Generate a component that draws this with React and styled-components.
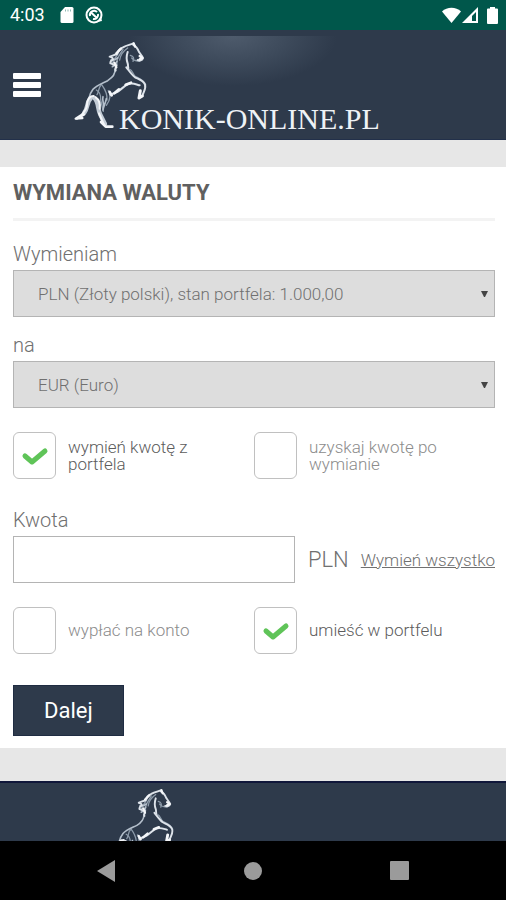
import React, { useState } from "react";
import styled, { createGlobalStyle, css } from "styled-components";

const color = {
  status: "#00574b",
  navy: "#2e3a4b",
  strip: "#e7e7e7",
  text: "#707070",
  muted: "#8c8c8c",
  border: "#b4b4b4",
  green: "#5fc458",
};

const GlobalStyle = createGlobalStyle`
  * {
    box-sizing: border-box;
  }
  body {
    margin: 0;
    background: ${color.strip};
    font-family: Roboto, "Liberation Sans", sans-serif;
    font-weight: 300;
    color: ${color.text};
  }
`;

const Screen = styled.div`
  display: flex;
  flex-direction: column;
  min-height: 100vh;
`;

const StatusBar = styled.div`
  display: flex;
  align-items: center;
  justify-content: space-between;
  height: 30px;
  padding: 0 8px 0 10px;
  background: ${color.status};
  color: #fff;
`;

const StatusBar__group = styled.div`
  display: flex;
  align-items: center;
  gap: ${({ $gap }) => $gap}px;
  svg {
    display: block;
  }
`;

const StatusBar__time = styled.span`
  font-size: 18px;
  font-weight: 400;
  line-height: 20px;
  margin-right: 4px;
`;

const Header = styled.header`
  display: flex;
  align-items: center;
  gap: 32px;
  height: 110px;
  padding: 0 13px;
  border-bottom: 1px solid #22304a;
  background:
    radial-gradient(
        ellipse 104px 50px at 46% 0,
        #4e5b6c,
        #3e4b5c 50%,
        ${color.navy}
      )
      0 6px no-repeat,
    ${color.navy};
`;

const MenuButton = styled.button`
  display: flex;
  flex-direction: column;
  gap: 3px;
  width: 28px;
  padding: 0;
  border: 0;
  background: none;
  cursor: pointer;
  span {
    height: 6px;
    border-radius: 1px;
    background: #fff;
  }
`;

const Logo = styled.a`
  display: flex;
  align-items: flex-end;
  color: #eef2f6;
  text-decoration: none;
  svg {
    display: block;
  }
`;

const Logo__text = styled.span`
  margin-left: -30px;
  font-family: "Liberation Serif", serif;
  font-size: 30px;
  font-weight: 400;
  line-height: 22px;
`;

const Card = styled.main`
  margin: 27px 0 33px;
  padding: 13px 11px 12px 13px;
  background: #fff;
`;

const Title = styled.h1`
  margin: 0 0 20px;
  padding-bottom: 12px;
  border-bottom: 3px solid #f3f3f3;
  font-size: 22px;
  font-weight: 700;
  line-height: 26px;
  color: #606060;
`;

const Label = styled.label`
  display: block;
  padding-bottom: 3px;
  font-size: 20px;
  line-height: 26px;
`;

const SelectBox = styled.div`
  display: grid;
  align-items: center;
  margin-bottom: 15px;
  svg {
    grid-area: 1 / 1;
    justify-self: end;
    margin-right: 7px;
    pointer-events: none;
  }
`;

const Select = styled.select`
  grid-area: 1 / 1;
  appearance: none;
  width: 100%;
  height: 47px;
  padding: 0 24px;
  border: 1px solid ${color.border};
  border-radius: 0;
  background: #ddd;
  font: inherit;
  font-size: 17px;
  color: ${color.text};
`;

const Options = styled.div`
  display: grid;
  grid-template-columns: 1fr 1fr;
  margin: 24px 0 28px;
`;

const Option = styled.label`
  display: flex;
  align-items: center;
  gap: 12px;
  padding-right: 40px;
  font-size: 17px;
  line-height: 17px;
  cursor: pointer;
  ${({ $on }) =>
    $on
      ? css`
          color: #5c5c5c;
        `
      : css`
          color: ${color.muted};
        `}
`;

const Option__box = styled.span`
  display: grid;
  flex: none;
  place-items: center;
  width: 43px;
  height: 47px;
  svg {
    grid-area: 1 / 1;
    pointer-events: none;
  }
`;

const Option__input = styled.input`
  grid-area: 1 / 1;
  appearance: none;
  width: 100%;
  height: 100%;
  margin: 0;
  border: 1px solid #c0c0c0;
  border-radius: 6px;
  background: #fff;
  cursor: pointer;
`;

const AmountRow = styled.div`
  display: flex;
  align-items: center;
`;

const AmountInput = styled.input`
  flex: 1;
  min-width: 0;
  height: 47px;
  padding: 0 12px;
  border: 1px solid ${color.border};
  background: #fff;
  font: inherit;
  font-size: 20px;
`;

const Currency = styled.span`
  margin: 0 12px 0 13px;
  font-size: 22px;
  line-height: 26px;
`;

const AllLink = styled.a`
  font-size: 17px;
  line-height: 26px;
  color: ${color.text};
`;

const SubmitButton = styled.button`
  display: block;
  min-width: 110px;
  height: 51px;
  margin-top: 31px;
  padding: 0 30px;
  border: 1px solid #1f2c42;
  background: ${color.navy};
  font: inherit;
  font-size: 22px;
  font-weight: 400;
  color: #fff;
  cursor: pointer;
`;

const Footer = styled.footer`
  flex: 1 0 60px;
  height: 60px;
  padding: 4px 0 0 104px;
  border-top: 2px solid #10173a;
  background: ${color.navy};
  overflow: hidden;
  svg {
    display: block;
  }
`;

const NavBar = styled.nav`
  display: grid;
  grid-template-columns: repeat(3, 1fr);
  height: 59px;
  padding: 0 33px;
  background: #000;
`;

const NavBar__button = styled.button`
  display: grid;
  place-items: center;
  padding: 0;
  border: 0;
  background: none;
  color: #9b9b9b;
`;

const Horse = ({ width, height }) => (
  <svg
    width={width}
    height={height}
    viewBox="22 16 228 270"
    fill="none"
    strokeLinecap="round"
    strokeLinejoin="round"
    aria-hidden="true"
  >
    <g stroke="#8e9cab" strokeWidth="4">
      <path d="M108 150c10 14 18 28 16 46M92 166c8 4 14 14 13 30l8 34M128 168c8 12 6 28-6 44" />
      <path d="M160 50c-6 20-20 22-20 40M172 44c-10 18-22 28-18 48M186 40c-14 10-22 20-24 36M194 62c10 2 12 10 8 18M198 70c6 10 16 8 24 10" />
      <path d="M192 104c10 4 8 14 18 22 12 6 24 10 30 24" />
      <path d="M106 152c-8 6-6 20-12 28" />
    </g>
    <g stroke="#b4bfcb" strokeWidth="5">
      <path d="M148 104c2 16-10 26-22 34-16 8-34 14-44 26-6 8-10 16-12 26" />
      <path d="M112 186c-4 12 4 20 2 32M122 192c-2 14-8 20-10 34" />
      <path d="M136 76c8 2 12 0 20-6M140 96c6-2 10-8 14-16" />
    </g>
    <g stroke="#dde3ea" strokeWidth="6">
      <path d="M204 26c-10 4-22 6-32 12-10 4-16 10-18 20-8 2-14 6-22 8 6 2 10 4 10 8-8 4-8 8-8 12 8 2 10 6 18 6-2 6-4 10-2 16" />
      <path d="M202 30c8 4 14 12 18 22 4 6 10 12 12 18-2 8-10 8-16 6M186 52c-4 12-4 24 0 34 2 6 0 8 2 14" />
      <path d="M182 98c8 10 16 22 26 30 12 6 26 10 30 22 4 12-4 20-8 34" />
      <path d="M222 152c-14-4-22-8-34-4-14 6-22 18-34 24l-20 8" />
    </g>
    <g stroke="#c3ccd6" strokeWidth="13">
      <path d="M76 190c-14 12-8 28-20 44" />
      <path d="M86 190c14 12 8 30 18 50l14 28" />
    </g>
    <g stroke="#f4f6f9" strokeWidth="6">
      <path d="M84 184c-14 0-20 14-20 26 0 12-8 20-14 28M90 188c12 8 14 22 12 34M100 236l14 32M56 240l-22 12" />
      <path d="M106 262l14 14h20" strokeWidth="8" />
      <path d="M224 168l-4 22 10-6" strokeWidth="9" />
      <path d="M132 172l6 10M160 164l-14 12M196 144l-16 6" strokeWidth="8" />
      <path d="M52 238l-22 14 20-2" strokeWidth="7" />
      <path d="M204 26l4 10M222 64l8 6-8 4M166 42l-14 14M146 84l6 14" strokeWidth="7" />
    </g>
  </svg>
);

const Arrow = () => (
  <svg width="7" height="8" viewBox="0 0 7 8" aria-hidden="true">
    <path d="M0 1h7L4 7H3z" fill="#444" />
  </svg>
);

const Check = () => (
  <svg width="28" height="20" viewBox="0 0 28 20" aria-hidden="true">
    <path
      d="M4 10l7 6L24 5"
      fill="none"
      stroke={color.green}
      strokeWidth="5"
      strokeLinecap="round"
      strokeLinejoin="round"
    />
  </svg>
);

function CheckOption({ name, checked, onChange, children }) {
  return (
    <Option $on={checked}>
      <Option__box>
        <Option__input
          type="radio"
          name={name}
          checked={checked}
          onChange={onChange}
        />
        {checked && <Check />}
      </Option__box>
      {children}
    </Option>
  );
}

function ExchangeForm() {
  const [mode, setMode] = useState("wallet");
  const [target, setTarget] = useState("wallet");
  const [amount, setAmount] = useState("");

  return (
    <form onSubmit={(e) => e.preventDefault()}>
      <Label htmlFor="from">Wymieniam</Label>
      <SelectBox>
        <Select id="from">
          <option>PLN (Złoty polski), stan portfela: 1.000,00</option>
        </Select>
        <Arrow />
      </SelectBox>
      <Label htmlFor="to">na</Label>
      <SelectBox>
        <Select id="to">
          <option>EUR (Euro)</option>
        </Select>
        <Arrow />
      </SelectBox>
      <Options>
        <CheckOption
          name="mode"
          checked={mode === "wallet"}
          onChange={() => setMode("wallet")}
        >
          wymień kwotę z portfela
        </CheckOption>
        <CheckOption
          name="mode"
          checked={mode === "result"}
          onChange={() => setMode("result")}
        >
          uzyskaj kwotę po wymianie
        </CheckOption>
      </Options>
      <Label htmlFor="amount">Kwota</Label>
      <AmountRow>
        <AmountInput
          id="amount"
          type="text"
          value={amount}
          onChange={(e) => setAmount(e.target.value)}
        />
        <Currency>PLN</Currency>
        <AllLink href="#all">Wymień wszystko</AllLink>
      </AmountRow>
      <Options>
        <CheckOption
          name="target"
          checked={target === "account"}
          onChange={() => setTarget("account")}
        >
          wypłać na konto
        </CheckOption>
        <CheckOption
          name="target"
          checked={target === "wallet"}
          onChange={() => setTarget("wallet")}
        >
          umieść w portfelu
        </CheckOption>
      </Options>
      <SubmitButton type="submit">Dalej</SubmitButton>
    </form>
  );
}

function App() {
  return (
    <Screen>
      <GlobalStyle />
      <StatusBar>
        <StatusBar__group $gap={11}>
          <StatusBar__time>4:03</StatusBar__time>
          <svg width="14" height="17" viewBox="0 0 14 17">
            <path
              d="M5 0h7a1.500 1.500 0 0 1 1.500 1.500v13a1.500 1.500 0 0 1-1.500 1.500H2a1.500 1.500 0 0 1-1.500-1.500V5z"
              fill="#fff"
            />
            <path d="M5.500 2.500v2M8 2.500v2M10.500 2.500v2" stroke="#8fb8b2" />
          </svg>
          <svg width="18" height="18" viewBox="0 0 18 18" fill="none">
            <circle cx="9" cy="9" r="7.500" stroke="#fff" strokeWidth="2" />
            <path
              d="M5 10a4.200 4.200 0 0 1 7-4M13 8a4.200 4.200 0 0 1-5 5M5.500 6l7 6.500"
              stroke="#fff"
              strokeWidth="2"
            />
            <path d="M12 16l5-1-1-4" fill="#fff" />
          </svg>
        </StatusBar__group>
        <StatusBar__group $gap={1}>
          <svg width="19" height="17" viewBox="0 0 19 17">
            <path d="M0 4.500C5 -.5 14 -.5 19 4.500L9.500 16z" fill="#fff" />
          </svg>
          <svg width="16" height="17" viewBox="0 0 16 17">
            <path d="M16 0v16H0z" fill="#fff" />
            <path d="M14 5v9h-4V9z" fill={color.status} />
          </svg>
          <svg width="19" height="17" viewBox="0 0 19 17">
            <path
              d="M11 1.500V0h5v1.500h2a1 1 0 0 1 1 1V16a1 1 0 0 1-1 1H9a1 1 0 0 1-1-1V2.500a1 1 0 0 1 1-1z"
              fill="#fff"
            />
          </svg>
        </StatusBar__group>
      </StatusBar>
      <Header>
        <MenuButton type="button" aria-label="Menu">
          <span />
          <span />
          <span />
        </MenuButton>
        <Logo href="#home">
          <Horse width={76} height={90} />
          <Logo__text>KONIK-ONLINE.PL</Logo__text>
        </Logo>
      </Header>
      <Card>
        <Title>WYMIANA WALUTY</Title>
        <ExchangeForm />
      </Card>
      <Footer>
        <Horse width={72} height={85} />
      </Footer>
      <NavBar>
        <NavBar__button type="button" aria-label="Back">
          <svg width="20" height="22" viewBox="0 0 20 22">
            <path d="M19 0v22L1 11z" fill="currentColor" />
          </svg>
        </NavBar__button>
        <NavBar__button type="button" aria-label="Home">
          <svg width="20" height="20" viewBox="0 0 20 20">
            <circle cx="10" cy="10" r="9" fill="currentColor" />
          </svg>
        </NavBar__button>
        <NavBar__button type="button" aria-label="Recents">
          <svg width="20" height="20" viewBox="0 0 20 20">
            <rect width="19" height="19" rx="1" fill="currentColor" />
          </svg>
        </NavBar__button>
      </NavBar>
    </Screen>
  );
}

export default App;
